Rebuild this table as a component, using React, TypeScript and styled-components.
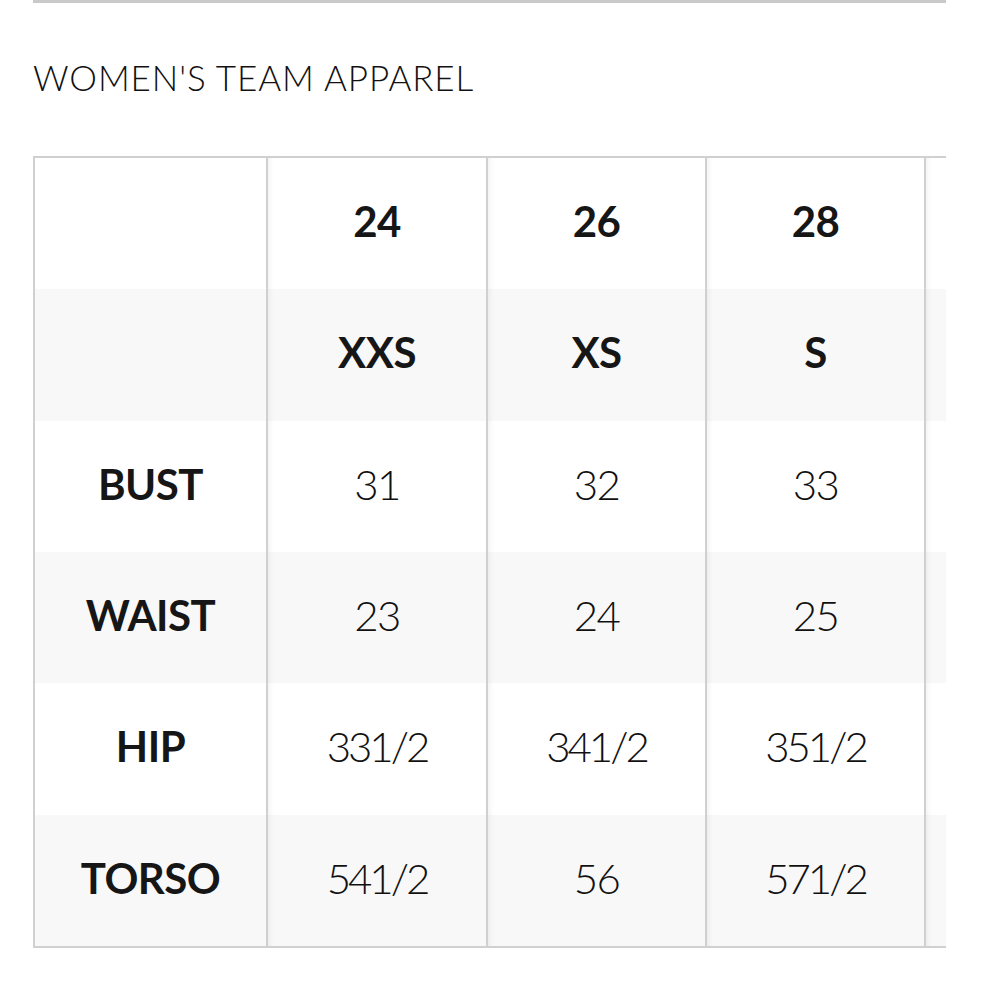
import styled, { createGlobalStyle } from "styled-components";

const GlobalStyle = createGlobalStyle`
  html, body {
    margin: 0;
    padding: 0;
    background: #fff;
  }
  body {
    font-family: Lato, "Open Sans", sans-serif;
    color: #1c1c1c;
  }
`;

const Page = styled.div`
  width: 1000px;
  height: 1000px;
  padding-left: 33px;
  box-sizing: border-box;
`;

const TopRule = styled.div`
  width: 913px;
  height: 3px;
  background: #c9c9c9;
`;

const Title = styled.h2`
  margin: 0;
  padding-top: 53px;
  height: 97px;
  box-sizing: border-box;
  font-size: 35px;
  font-weight: 300;
  line-height: 42px;
  letter-spacing: 0.9px;
  color: #111;
`;

const ChartFrame = styled.div`
  margin-top: 56px;
  width: 913px;
  box-sizing: border-box;
  overflow: hidden;
  border-top: 2px solid #d0d0d0;
  border-bottom: 2px solid #d0d0d0;
  border-left: 2px solid #d0d0d0;
`;

const Row = styled.div<{ $shade: boolean }>`
  display: grid;
  grid-template-columns: 233px 220px 219px 219px 219px;
  width: 1110px;
  height: 131.33px;
  background: ${(p) => (p.$shade ? "#f8f8f8" : "#ffffff")};
`;

const Cell = styled.div<{ $bold?: boolean; $label?: boolean; $tight?: boolean }>`
  display: flex;
  align-items: center;
  justify-content: center;
  padding-bottom: 5px;
  box-sizing: border-box;
  border-right: 2px solid #d0d0d0;
  font-size: 42px;
  font-weight: ${(p) => (p.$bold ? 700 : 300)};
  color: ${(p) => (p.$bold ? "#161616" : "#111")};
  letter-spacing: ${(p) => (p.$bold ? "-0.5px" : p.$tight ? "-3px" : "-1.5px")};
  white-space: nowrap;
  box-shadow: ${(p) =>
    p.$label ? "none" : "inset 7px 0 6px -6px rgba(0, 0, 0, 0.07)"};
`;

// the fifth column is only a sliver in view, so its cells stay empty
const sizes = ["24", "26", "28", ""];
const letters = ["XXS", "XS", "S", ""];

const measures: { label: string; values: string[] }[] = [
  { label: "BUST", values: ["31", "32", "33", ""] },
  { label: "WAIST", values: ["23", "24", "25", ""] },
  { label: "HIP", values: ["331/2", "341/2", "351/2", ""] },
  { label: "TORSO", values: ["541/2", "56", "571/2", ""] },
];

export default function App() {
  return (
    <>
      <GlobalStyle />
      <Page>
        <TopRule />
        <Title>WOMEN'S TEAM APPAREL</Title>
        <ChartFrame>
          <Row $shade={false}>
            <Cell $label />
            {sizes.map((s, j) => (
              <Cell key={j} $bold>
                {s}
              </Cell>
            ))}
          </Row>
          <Row $shade>
            <Cell $label />
            {letters.map((s, j) => (
              <Cell key={j} $bold>
                {s}
              </Cell>
            ))}
          </Row>
          {measures.map((m, i) => (
            <Row key={m.label} $shade={i % 2 === 1}>
              <Cell $label $bold>
                {m.label}
              </Cell>
              {m.values.map((v, j) => (
                <Cell key={j} $tight={v.includes("/")}>
                  {v}
                </Cell>
              ))}
            </Row>
          ))}
        </ChartFrame>
      </Page>
    </>
  );
}
